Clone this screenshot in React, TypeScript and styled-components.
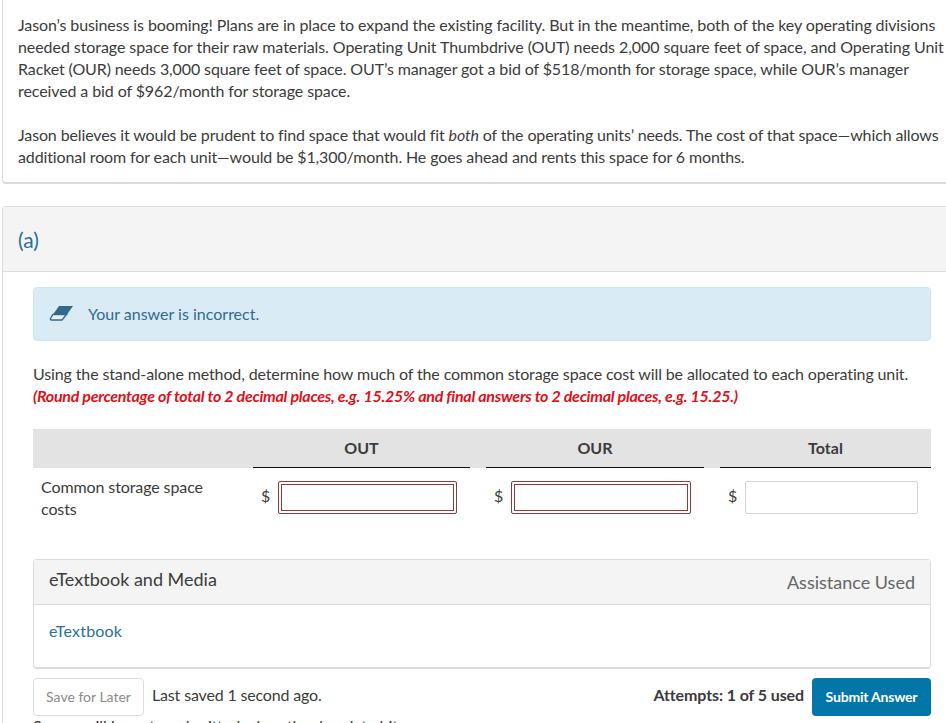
import React from "react";
import styled, { createGlobalStyle } from "styled-components";

const GlobalStyle = createGlobalStyle`
  html, body {
    margin: 0;
    padding: 0;
    height: 100%;
    overflow: hidden;
    background: #fff;
  }
  body {
    font-family: Lato, "Liberation Sans", sans-serif;
    font-size: 16px;
    color: #3b3b3b;
  }
`;

const Page = styled.div`
  width: 946px;
  height: 723px;
  overflow: hidden;
  padding-left: 2px;
  box-sizing: border-box;
`;

const StemCard = styled.div`
  margin-top: -4px;
  width: 1000px;
  height: 188px;
  box-sizing: border-box;
  padding: 17px 56px 0 15px;
  background: #fff;
  border: 1px solid #dcdcdc;
  border-bottom-width: 2px;
  border-radius: 4px;
`;

const Paragraph = styled.p`
  margin: 0 0 22px;
  width: 930px;
  line-height: 22px;
  white-space: nowrap;
`;

const Line = styled.span<{ $tracking: number }>`
  display: block;
  letter-spacing: ${(p) => p.$tracking}px;
`;

const PartCard = styled.div`
  margin-top: 22px;
  width: 1000px;
  border: 1px solid #dcdcdc;
  border-bottom: none;
  border-radius: 4px 4px 0 0;
  height: 540px;
`;

const PartHeader = styled.div`
  height: 65px;
  box-sizing: border-box;
  padding: 17px 15px 0;
  background: #f4f4f4;
  border-bottom: 1px solid #dcdcdc;
  color: #2a7097;
  font-size: 21px;
  line-height: 32px;
`;

const PartBody = styled.div`
  width: 898px;
  padding: 15px 0 0 30px;
`;

const Alert = styled.div`
  display: flex;
  align-items: center;
  gap: 15px;
  height: 54px;
  box-sizing: border-box;
  padding: 0 0 2px 15px;
  background: #d9ecf5;
  border: 1px solid #cfe5f0;
  border-radius: 4px;
  color: #33698c;
`;

const Question = styled.p`
  margin: 22px 0 0;
  line-height: 22px;
  letter-spacing: -0.125px;
  white-space: nowrap;
`;

const Hint = styled.span`
  display: block;
  color: #e0101a;
  font-weight: 700;
  font-style: italic;
  letter-spacing: -0.26px;
`;

const Grid = styled.div`
  margin-top: 22px;
  display: grid;
  grid-template-columns: 204px 217px 218px 211px;
  column-gap: 16px;
  width: 898px;
`;

const HeadBand = styled.div`
  grid-column: 1 / -1;
  display: grid;
  grid-template-columns: subgrid;
  height: 39px;
  background: #e3e3e3;
`;

const HeadCell = styled.div`
  border-bottom: 1px solid #111;
  text-align: center;
  font-weight: 700;
  color: #3b3b3b;
  line-height: 37px;
  box-sizing: border-box;
  &:first-child { border-bottom: none; }
`;

const RowLabel = styled.div`
  padding: 8px 8px 0;
  line-height: 22px;
  letter-spacing: -0.1px;
`;

const AmountCell = styled.div`
  display: flex;
  align-items: flex-start;
  padding: 13px 13px 0 8px;
  gap: 8px;
`;

const Dollar = styled.span`
  line-height: 30px;
  width: 9px;
`;

const AmountInput = styled.div<{ $wrong?: boolean }>`
  flex: 1;
  height: 33px;
  box-sizing: border-box;
  border-radius: 2px;
  background: #fff;
  border: 1px solid ${(p) => (p.$wrong ? "#8c3a3a" : "#d4d4d4")};
  ${(p) => (p.$wrong ? "outline: 1px solid #8c3a3a; outline-offset: -4px;" : "")}
`;

const MediaCard = styled.div`
  margin-top: 39px;
  width: 898px;
  height: 110px;
  box-sizing: border-box;
  border: 1px solid #dcdcdc;
  border-bottom-width: 2px;
  border-radius: 4px;
`;

const MediaHeader = styled.div`
  display: flex;
  justify-content: space-between;
  height: 45px;
  box-sizing: border-box;
  padding: 7px 15px 0;
  background: #f4f4f4;
  border-bottom: 1px solid #dcdcdc;
  font-size: 18px;
  line-height: 24px;
`;

const AssistanceLabel = styled.span`
  margin-top: 3px;
  color: #666;
`;

const MediaLink = styled.a`
  display: block;
  padding: 15px 15px 0;
  color: #2a7097;
  line-height: 22px;
  letter-spacing: 0.2px;
`;

const Footer = styled.div`
  display: flex;
  align-items: center;
  margin-top: 9px;
  width: 898px;
`;

const SaveButton = styled.button`
  width: 111px;
  height: 38px;
  padding: 0 0 2px;
  background: #fff;
  border: 1px solid #dcdcdc;
  border-radius: 4px;
  font: 14px Lato, sans-serif;
  color: #8a8a8a;
`;

const SavedNote = styled.span`
  margin: 0 0 6px 8px;
  flex: 1;
  letter-spacing: -0.16px;
`;

const Attempts = styled.span`
  margin-bottom: 6px;
  font-weight: 700;
  letter-spacing: -0.1px;
`;

const SubmitButton = styled.button`
  margin-left: 8px;
  width: 119px;
  height: 38px;
  padding: 0 0 2px;
  background: #0077a8;
  border: none;
  border-radius: 4px;
  color: #fff;
  font: 700 14px Lato, sans-serif;
  letter-spacing: -0.2px;
`;

const Cutoff = styled.div`
  margin-top: -1px;
  line-height: 22px;
  white-space: nowrap;
`;

const EraserIcon = () => (
  <svg width="24" height="16" viewBox="0 0 24 16">
    <path d="M10 1H24L18 9.500H4Z" fill="#33698c" />
    <path d="M4 9.500H17.500L13 15H2.500Q1 15 1.500 13.500Z" fill="#e8f3f8" stroke="#33698c" strokeWidth="1.400" />
  </svg>
);

export default function App() {
  return (
    <Page>
      <GlobalStyle />
      <StemCard>
        <Paragraph>
          <Line $tracking={-0.105}>
            Jason’s business is booming! Plans are in place to expand the existing facility. But in the meantime, both of the key operating divisions
          </Line>
          <Line $tracking={-0.07}>
            needed storage space for their raw materials. Operating Unit Thumbdrive (OUT) needs 2,000 square feet of space, and Operating Unit
          </Line>
          <Line $tracking={-0.115}>
            Racket (OUR) needs 3,000 square feet of space. OUT’s manager got a bid of $518/month for storage space, while OUR’s manager
          </Line>
          <Line $tracking={-0.1}>received a bid of $962/month for storage space.</Line>
        </Paragraph>
        <Paragraph>
          <Line $tracking={-0.13}>
            Jason believes it would be prudent to find space that would fit <em>both</em> of the operating units’ needs. The cost of that space—which allows
          </Line>
          <Line $tracking={-0.12}>
            additional room for each unit—would be $1,300/month. He goes ahead and rents this space for 6 months.
          </Line>
        </Paragraph>
      </StemCard>
      <PartCard>
        <PartHeader>(a)</PartHeader>
        <PartBody>
          <Alert>
            <EraserIcon />
            Your answer is incorrect.
          </Alert>
          <Question>
            Using the stand-alone method, determine how much of the common storage space cost will be allocated to each operating unit.
            <Hint>(Round percentage of total to 2 decimal places, e.g. 15.25% and final answers to 2 decimal places, e.g. 15.25.)</Hint>
          </Question>
          <Grid>
            <HeadBand>
              <HeadCell />
              <HeadCell>OUT</HeadCell>
              <HeadCell>OUR</HeadCell>
              <HeadCell>Total</HeadCell>
            </HeadBand>
            <RowLabel>Common storage space costs</RowLabel>
            <AmountCell>
              <Dollar>$</Dollar>
              <AmountInput $wrong />
            </AmountCell>
            <AmountCell>
              <Dollar>$</Dollar>
              <AmountInput $wrong />
            </AmountCell>
            <AmountCell>
              <Dollar>$</Dollar>
              <AmountInput />
            </AmountCell>
          </Grid>
          <MediaCard>
            <MediaHeader>
              <span>eTextbook and Media</span>
              <AssistanceLabel>Assistance Used</AssistanceLabel>
            </MediaHeader>
            <MediaLink>eTextbook</MediaLink>
          </MediaCard>
          <Footer>
            <SaveButton>Save for Later</SaveButton>
            <SavedNote>Last saved 1 second ago.</SavedNote>
            <Attempts>Attempts: 1 of 5 used</Attempts>
            <SubmitButton>Submit Answer</SubmitButton>
          </Footer>
          <Cutoff>Scores will be auto-submitted when the due date hits</Cutoff>
        </PartBody>
      </PartCard>
    </Page>
  );
}
